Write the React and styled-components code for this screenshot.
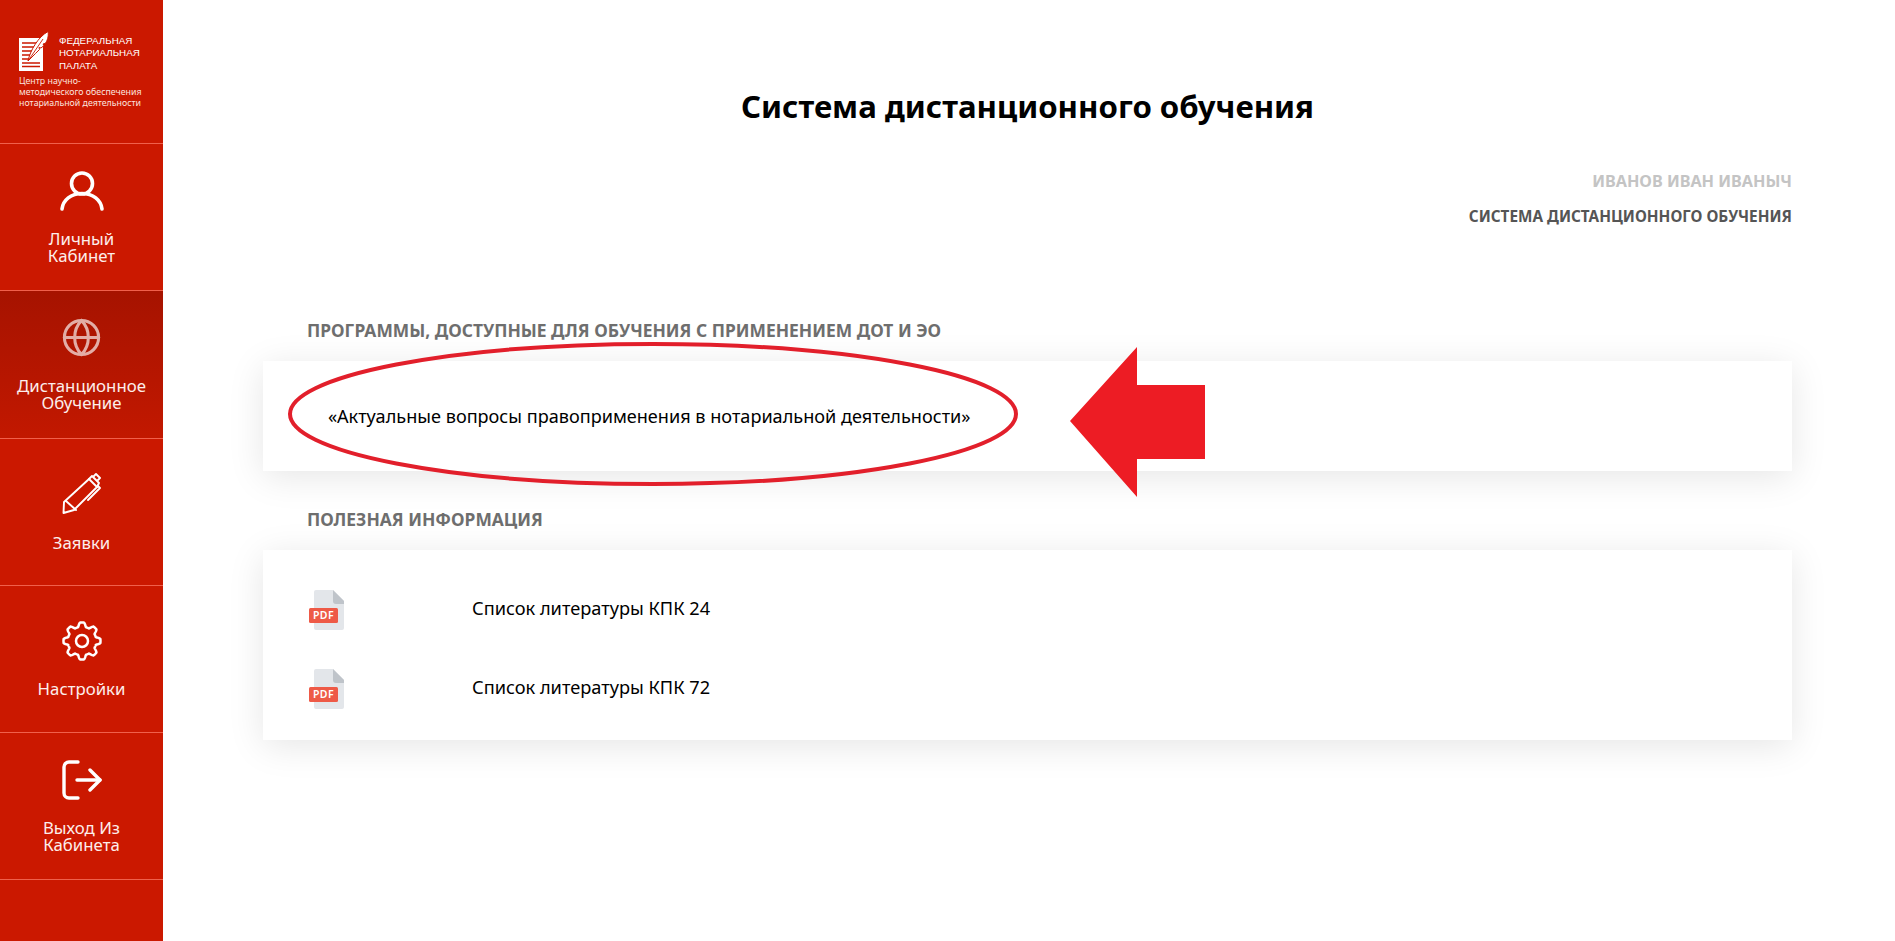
import styled, { createGlobalStyle } from "styled-components";
import { Globe } from "lucide-react";

const GlobalStyle = createGlobalStyle`
  html, body {
    margin: 0;
    padding: 0;
    background: #fff;
  }
  * {
    box-sizing: border-box;
  }
`;

const Page = styled.div`
  display: flex;
  position: relative;
  width: 100%;
  height: 941px;
  overflow: hidden;
  font-family: "Noto Sans", "Open Sans", sans-serif;
`;

const Sidebar = styled.aside`
  flex: 0 0 163px;
  display: flex;
  flex-direction: column;
  background: #cb1800;
`;

const Brand = styled.div`
  height: 144px;
  padding: 31px 0 0 19px;
  border-bottom: 1px solid #f0604c;
  color: #fff;
  font-family: "Liberation Sans", Arial, sans-serif;
`;

const BrandTop = styled.div`
  display: flex;
  gap: 10px;
`;

const BrandName = styled.div`
  padding-top: 4px;
  font-size: 9.8px;
  line-height: 12.3px;
  text-transform: uppercase;
`;

const BrandSub = styled.div`
  margin-top: 4px;
  font-family: "Noto Sans", sans-serif;
  font-size: 8.8px;
  line-height: 11px;
  color: #fbe3df;
  white-space: nowrap;
`;

const NavItem = styled.a`
  height: 147.3px;
  display: flex;
  flex-direction: column;
  align-items: center;
  justify-content: center;
  gap: 19px;
  border-bottom: 1px solid #f0604c;
  color: #fff;
  background: ${(p) =>
    p.$active ? "linear-gradient(180deg, #a61300 0%, #c21800 100%)" : "transparent"};

  svg {
    display: block;
    opacity: ${(p) => (p.$active ? 0.65 : 1)};
  }
`;

const NavLabel = styled.span`
  width: 150px;
  text-align: center;
  font-size: 16.8px;
  line-height: 17px;
  white-space: pre-line;
  color: #fdeeeb;
`;

const Main = styled.main`
  flex: 1;
  padding: 86px 103px 0 100px;
`;

const Title = styled.h1`
  margin: 0;
  text-align: center;
  font-size: 31.2px;
  line-height: 40px;
  font-weight: 700;
  color: #000;
`;

const UserBlock = styled.div`
  margin-top: 45px;
  display: flex;
  flex-direction: column;
  align-items: flex-end;
  gap: 15px;
`;

const UserLine = styled.div`
  font-size: ${(p) => p.$size}px;
  line-height: 20px;
  font-weight: 700;
  text-transform: uppercase;
  color: ${(p) => p.$color};
`;

const SectionTitle = styled.h2`
  margin: ${(p) => p.$top}px 0 ${(p) => p.$bottom}px 44px;
  font-size: 17.4px;
  line-height: 20px;
  font-weight: 700;
  text-transform: uppercase;
  color: #6e6e6e;
`;

const Card = styled.section`
  background: #fff;
  box-shadow: 0 6px 34px rgba(0, 0, 0, 0.1);
`;

const ProgramCard = styled(Card)`
  height: 110px;
  display: flex;
  align-items: center;
  padding-left: 65px;
  font-size: 18.1px;
  color: #000;
`;

const FilesCard = styled(Card)`
  height: 190px;
  padding: 40px 0 0 46px;
  display: flex;
  flex-direction: column;
  gap: 39px;
`;

const FileRow = styled.div`
  display: flex;
  align-items: center;
  height: 40px;
`;

const FileName = styled.span`
  margin-left: 127px;
  margin-top: -4px;
  font-size: 18.2px;
  color: #000;
`;

const Annotation = styled.svg`
  position: absolute;
  left: 0;
  top: 0;
  pointer-events: none;
`;

const PdfLabel = styled.text`
  font-family: "Noto Sans", sans-serif;
  font-size: 10.5px;
  font-weight: 600;
  letter-spacing: 0.4px;
  fill: #fff;
`;

// gear outline: 8 flat, rounded teeth around the centre of a 40px box
const gearPath = () => {
  const points = [];
  for (let i = 0; i < 240; i++) {
    const a = (i / 240) * Math.PI * 2;
    const wave = Math.max(-1, Math.min(1, 1.7 * Math.cos(8 * a)));
    const r = 16.4 + 2.1 * wave;
    points.push(`${(20 + r * Math.sin(a)).toFixed(2)} ${(20 - r * Math.cos(a)).toFixed(2)}`);
  }
  return `M${points.join("L")}Z`;
};

const UserIcon = () => (
  <svg width="44" height="40" viewBox="0 0 44 40" fill="none" stroke="#fff" strokeWidth="3.6" strokeLinecap="round">
    <circle cx="22" cy="12.5" r="10.5" />
    <path d="M2 38c1-9 9-15.500 20-15.500s19 6.500 20 15.500" />
  </svg>
);

const PenIcon = () => (
  <svg width="42" height="42" viewBox="0 0 42 42" fill="none" stroke="#fff" strokeWidth="1.9" strokeLinejoin="round" strokeLinecap="round">
    <path d="M2.500 40 3 29 28 6l8 8-23 23z" />
    <path d="M5 28l10 9" />
    <path d="M28 6l3-3 7 7-2 4" />
    <path d="M33 3l2-2 4 4-2 2" />
    <path d="M37 13l2 2-12 12" />
  </svg>
);

const GearIcon = () => (
  <svg width="40" height="40" viewBox="0 0 40 40" fill="none" stroke="#fff" strokeWidth="2.500" strokeLinejoin="round">
    <circle cx="20" cy="20" r="6" />
    <path d={gearPath()} />
  </svg>
);

const ExitIcon = () => (
  <svg width="40" height="40" viewBox="0 0 40 40" fill="none" stroke="#fff" strokeWidth="3.400" strokeLinecap="round" strokeLinejoin="round">
    <path d="M16 2H7a5 5 0 0 0-5 5v26a5 5 0 0 0 5 5h9" />
    <path d="M15 20h23" />
    <path d="M28 10l10 10-10 10" />
  </svg>
);

const LogoIcon = () => (
  <svg width="30" height="41" viewBox="0 0 30 41">
    <path d="M0 7h24v33H0z" fill="#fff" />
    <g stroke="#cb1800" strokeWidth="1.300">
      <path d="M3 12h15M3 16h13M3 20h11M3 24h10M3 28h8M3 32h18M3 35.500h18" />
    </g>
    <path d="M9 30C11 20 19 6 29 0.500c1 5-1 10-3 12l-2 .5 1 1.500-3 2.500-2-.5 .5 2-4 4z" fill="#fff" stroke="#cb1800" strokeWidth="1" />
    <path d="M9 30 24 8" stroke="#cb1800" strokeWidth="0.900" />
  </svg>
);

const PdfIcon = () => (
  <svg width="36" height="40" viewBox="0 0 36 40">
    <path d="M5 2a2 2 0 0 1 2-2h17l11 11v27a2 2 0 0 1-2 2H7a2 2 0 0 1-2-2z" fill="#e3e6ea" />
    <path d="M24 0l11 11v3h-8a3 3 0 0 1-3-3z" fill="#bfc4ca" />
    <rect x="0" y="18" width="29" height="15" rx="1.500" fill="#ee5a47" />
    <PdfLabel x="14.500" y="29.300" textAnchor="middle">PDF</PdfLabel>
  </svg>
);

const navItems = [
  { label: "Личный\nКабинет", icon: <UserIcon /> },
  { label: "Дистанционное\nОбучение", icon: <Globe size={41} strokeWidth={1.8} />, active: true },
  { label: "Заявки", icon: <PenIcon /> },
  { label: "Настройки", icon: <GearIcon /> },
  { label: "Выход Из\nКабинета", icon: <ExitIcon /> },
];

const files = ["Список литературы КПК 24", "Список литературы КПК 72"];

const App = () => {
  return (
    <Page>
      <GlobalStyle />
      <Sidebar>
        <Brand>
          <BrandTop>
            <LogoIcon />
            <BrandName>
              Федеральная
              <br />
              Нотариальная
              <br />
              Палата
            </BrandName>
          </BrandTop>
          <BrandSub>
            Центр научно-
            <br />
            методического обеспечения
            <br />
            нотариальной деятельности
          </BrandSub>
        </Brand>
        {navItems.map((item) => (
          <NavItem key={item.label} $active={item.active}>
            {item.icon}
            <NavLabel>{item.label}</NavLabel>
          </NavItem>
        ))}
      </Sidebar>
      <Main>
        <Title>Система дистанционного обучения</Title>
        <UserBlock>
          <UserLine $size={16.2} $color="#c4c4c4">Иванов Иван Иваныч</UserLine>
          <UserLine $size={15.3} $color="#555">Система дистанционного обучения</UserLine>
        </UserBlock>
        <SectionTitle $top={94} $bottom={21}>
          Программы, доступные для обучения с применением ДОТ и ЭО
        </SectionTitle>
        <ProgramCard>«Актуальные вопросы правоприменения в нотариальной деятельности»</ProgramCard>
        <SectionTitle $top={38} $bottom={21}>
          Полезная информация
        </SectionTitle>
        <FilesCard>
          {files.map((name) => (
            <FileRow key={name}>
              <PdfIcon />
              <FileName>{name}</FileName>
            </FileRow>
          ))}
        </FilesCard>
      </Main>
      <Annotation width="1895" height="941" viewBox="0 0 1895 941">
        <ellipse cx="653" cy="414" rx="363" ry="70" fill="none" stroke="#e21f2b" strokeWidth="4" />
        <path d="M1070 421 1137 347v38h68v74h-68v38z" fill="#ed1c24" />
      </Annotation>
    </Page>
  );
};

export default App;
